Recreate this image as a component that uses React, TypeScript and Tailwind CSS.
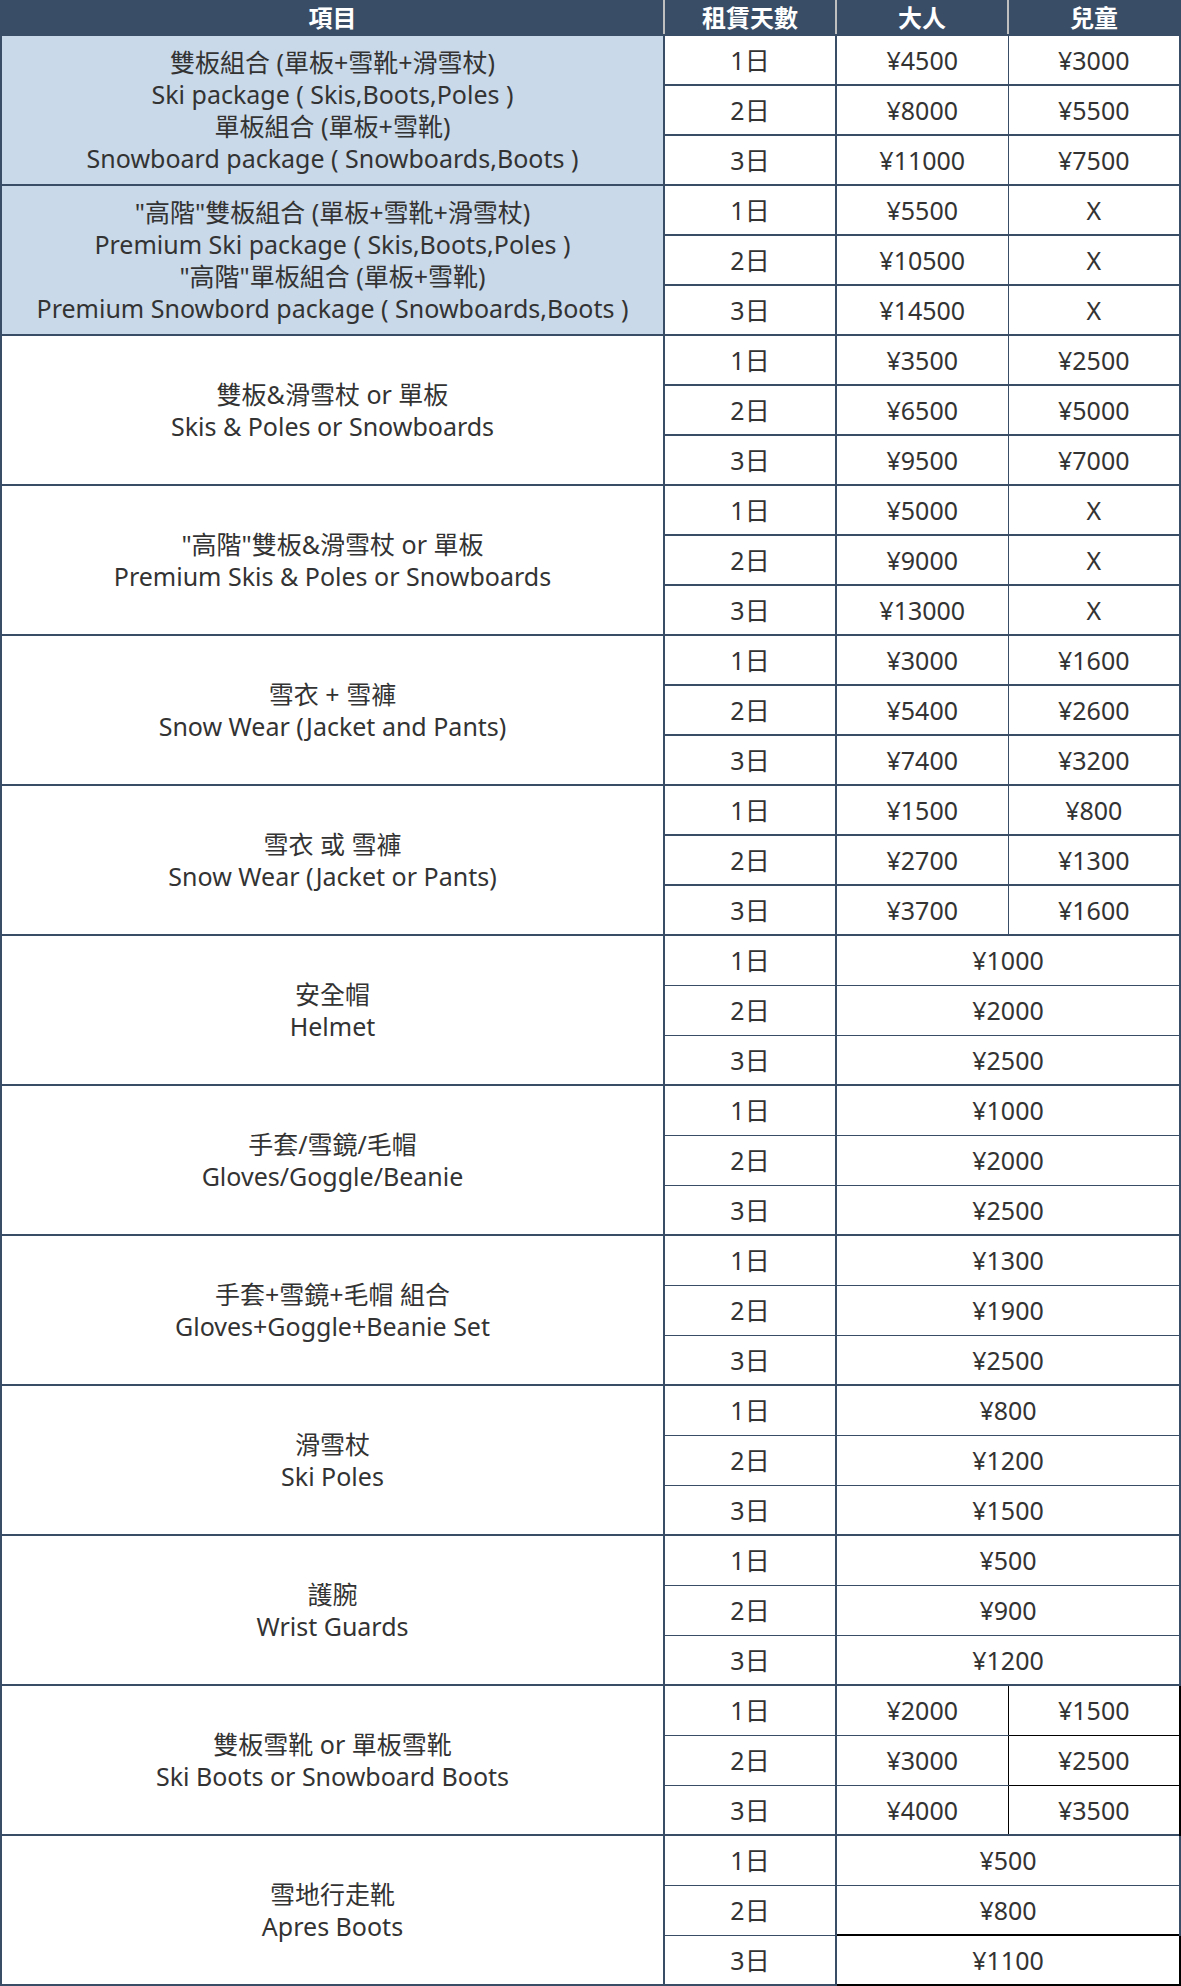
import React from "react";

type Group = {
  label: string[];
  blue?: boolean;
  thin?: boolean;
  prices: (string | [string, string])[];
  boots?: boolean;
  apres?: boolean;
};

const groups: Group[] = [
  {
    label: [
      "雙板組合 (單板+雪靴+滑雪杖)",
      "Ski package ( Skis,Boots,Poles )",
      "單板組合 (單板+雪靴)",
      "Snowboard package ( Snowboards,Boots )",
    ],
    blue: true,
    prices: [["¥4500", "¥3000"], ["¥8000", "¥5500"], ["¥11000", "¥7500"]],
  },
  {
    label: [
      "\"高階\"雙板組合 (單板+雪靴+滑雪杖)",
      "Premium Ski package ( Skis,Boots,Poles )",
      "\"高階\"單板組合 (單板+雪靴)",
      "Premium Snowbord package ( Snowboards,Boots )",
    ],
    blue: true,
    prices: [["¥5500", "X"], ["¥10500", "X"], ["¥14500", "X"]],
  },
  {
    label: ["雙板&滑雪杖 or 單板", "Skis & Poles or Snowboards"],
    prices: [["¥3500", "¥2500"], ["¥6500", "¥5000"], ["¥9500", "¥7000"]],
  },
  {
    label: ["\"高階\"雙板&滑雪杖 or 單板", "Premium Skis & Poles or Snowboards"],
    prices: [["¥5000", "X"], ["¥9000", "X"], ["¥13000", "X"]],
  },
  {
    label: ["雪衣 + 雪褲", "Snow Wear (Jacket and Pants)"],
    prices: [["¥3000", "¥1600"], ["¥5400", "¥2600"], ["¥7400", "¥3200"]],
  },
  {
    label: ["雪衣 或 雪褲", "Snow Wear (Jacket or Pants)"],
    prices: [["¥1500", "¥800"], ["¥2700", "¥1300"], ["¥3700", "¥1600"]],
  },
  { label: ["安全帽", "Helmet"], thin: true, prices: ["¥1000", "¥2000", "¥2500"] },
  {
    label: ["手套/雪鏡/毛帽", "Gloves/Goggle/Beanie"],
    thin: true,
    prices: ["¥1000", "¥2000", "¥2500"],
  },
  {
    label: ["手套+雪鏡+毛帽 組合", "Gloves+Goggle+Beanie Set"],
    thin: true,
    prices: ["¥1300", "¥1900", "¥2500"],
  },
  { label: ["滑雪杖", "Ski Poles"], thin: true, prices: ["¥800", "¥1200", "¥1500"] },
  { label: ["護腕", "Wrist Guards"], thin: true, prices: ["¥500", "¥900", "¥1200"] },
  {
    label: ["雙板雪靴 or 單板雪靴", "Ski Boots or Snowboard Boots"],
    thin: true,
    boots: true,
    prices: [["¥2000", "¥1500"], ["¥3000", "¥2500"], ["¥4000", "¥3500"]],
  },
  {
    label: ["雪地行走靴", "Apres Boots"],
    thin: true,
    apres: true,
    prices: ["¥500", "¥800", "¥1100"],
  },
];

export default function App() {
  return (
    <div className="w-[1181px] bg-white font-['Noto_Sans','Noto_Sans_CJK_TC',sans-serif] text-[#333333]">
      <table className="w-[1181px] table-fixed border-collapse text-center text-[25px]">
        <colgroup>
          <col className="w-[663px]" />
          <col className="w-[172px]" />
          <col className="w-[172px]" />
          <col className="w-[172px]" />
        </colgroup>

        {/* HEADER */}
        <thead>
          <tr className="h-[34px] bg-[#3a4d66] text-[24px] text-white">
            <th className="border-2 border-[#3a4d66] border-r-[#bfbfbf] p-0 font-bold leading-[28px]">項目</th>
            <th className="border-2 border-[#3a4d66] border-r-[#bfbfbf] p-0 font-bold leading-[28px]">租賃天數</th>
            <th className="border-2 border-[#3a4d66] border-r-[#bfbfbf] p-0 font-bold leading-[28px]">大人</th>
            <th className="border-2 border-[#3a4d66] p-0 font-bold leading-[28px]">兒童</th>
          </tr>
        </thead>

        {/* BODY */}
        <tbody>
          {groups.map((g, gi) =>
            g.prices.map((p, ri) => {
              const top = ri === 0 ? "border-t-2" : g.thin ? "border-t" : "border-t-2";
              const bottom = ri === 2 ? "border-b-2" : g.thin ? "border-b" : "border-b-2";
              return (
                <tr key={`${gi}-${ri}`} className="h-[50px]">
                  {ri === 0 && (
                    <td
                      rowSpan={3}
                      className={`border-2 border-[#3a4d66] p-0 leading-[32px] ${
                        g.blue ? "bg-[#c9d9e9]" : "bg-white"
                      }`}
                    >
                      {g.label.map((l) => (
                        <div key={l} className="whitespace-nowrap">
                          {l}
                        </div>
                      ))}
                    </td>
                  )}
                  <td className={`border-x-2 ${top} ${bottom} border-[#3a4d66] p-0 leading-[30px]`}>{ri + 1}日</td>
                  {Array.isArray(p) ? (
                    <>
                      <td
                        className={`border-l-2 ${top} ${bottom} p-0 leading-[30px] ${
                          g.boots ? "border-r border-[#3a4d66] border-r-black" : "border-r border-[#3a4d66]"
                        }`}
                      >
                        {p[0]}
                      </td>
                      <td
                        className={`border-r-2 p-0 leading-[30px] ${
                          g.boots
                            ? "border-l border-t border-b border-black"
                            : `border-l ${top} ${bottom} border-[#3a4d66]`
                        }`}
                      >
                        {p[1]}
                      </td>
                    </>
                  ) : (
                    <td
                      colSpan={2}
                      className={`p-0 leading-[30px] ${
                        g.apres && ri === 2
                          ? "border-2 border-black"
                          : `border-x-2 ${top} ${bottom} border-[#3a4d66]`
                      }`}
                    >
                      {p}
                    </td>
                  )}
                </tr>
              );
            })
          )}
        </tbody>
      </table>
    </div>
  );
}
